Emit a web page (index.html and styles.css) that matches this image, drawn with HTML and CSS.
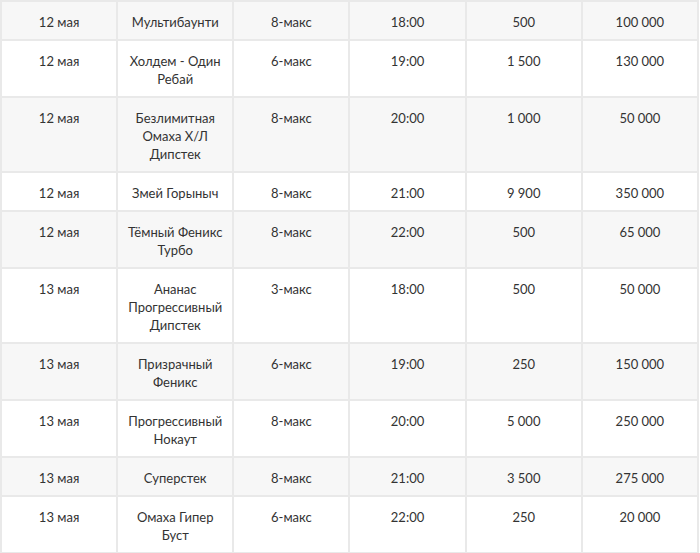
FILE: index.html
```
<!DOCTYPE html>
<html lang="ru">
<head>
<meta charset="utf-8">
<link rel="stylesheet" href="styles.css">
</head>
<body>
<table class="schedule">
<colgroup><col><col><col><col><col><col></colgroup>
<tbody>
<tr class="odd"><td>12 мая</td><td>Мультибаунти</td><td>8-макс</td><td>18:00</td><td>500</td><td>100&nbsp;000</td></tr>
<tr><td>12 мая</td><td>Холдем - Один Ребай</td><td>6-макс</td><td>19:00</td><td>1&nbsp;500</td><td>130&nbsp;000</td></tr>
<tr class="odd"><td>12 мая</td><td>Безлимитная Омаха Х/Л Дипстек</td><td>8-макс</td><td>20:00</td><td>1&nbsp;000</td><td>50&nbsp;000</td></tr>
<tr><td>12 мая</td><td>Змей Горыныч</td><td>8-макс</td><td>21:00</td><td>9&nbsp;900</td><td>350&nbsp;000</td></tr>
<tr class="odd"><td>12 мая</td><td>Тёмный Феникс Турбо</td><td>8-макс</td><td>22:00</td><td>500</td><td>65&nbsp;000</td></tr>
<tr><td>13 мая</td><td>Ананас Прогрессивный Дипстек</td><td>3-макс</td><td>18:00</td><td>500</td><td>50&nbsp;000</td></tr>
<tr class="odd"><td>13 мая</td><td>Призрачный Феникс</td><td>6-макс</td><td>19:00</td><td>250</td><td>150&nbsp;000</td></tr>
<tr><td>13 мая</td><td>Прогрессивный Нокаут</td><td>8-макс</td><td>20:00</td><td>5&nbsp;000</td><td>250&nbsp;000</td></tr>
<tr class="odd"><td>13 мая</td><td>Суперстек</td><td>8-макс</td><td>21:00</td><td>3&nbsp;500</td><td>275&nbsp;000</td></tr>
<tr><td>13 мая</td><td>Омаха Гипер Буст</td><td>6-макс</td><td>22:00</td><td>250</td><td>20&nbsp;000</td></tr>
</tbody>
</table>
</body>
</html>
```
FILE: styles.css
```
html, body {
  margin: 0;
  padding: 0;
  background: #ffffff;
}
.schedule {
  width: 699px;
  border-collapse: collapse;
  table-layout: fixed;
  font-family: Lato, "Noto Sans", sans-serif;
  font-size: 13px;
  line-height: 18px;
  color: #333333;
}
.schedule td {
  border: 2px solid #e9e9e9;
  padding: 11px 8px 8px;
  text-align: center;
  vertical-align: top;
}
.schedule tr.odd td {
  background: #f7f7f7;
}
```
